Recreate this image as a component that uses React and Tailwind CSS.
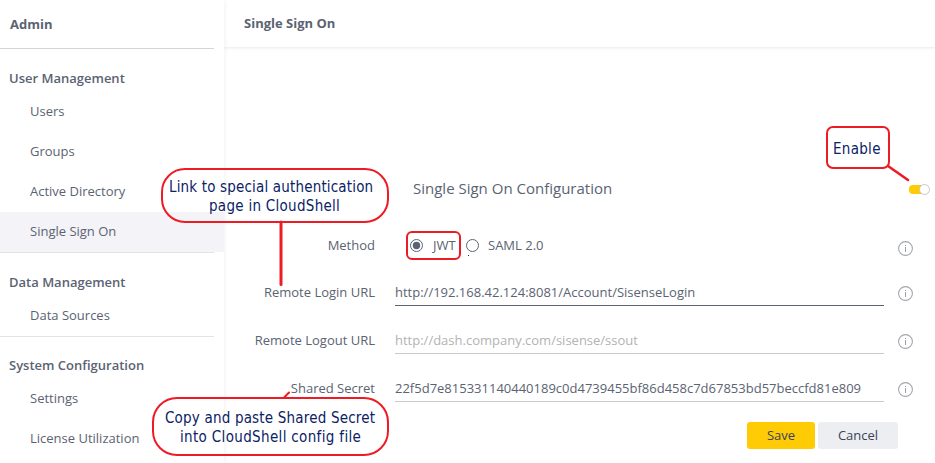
import React from "react";

const sections = [
  { title: "User Management", items: ["Users", "Groups", "Active Directory", "Single Sign On"] },
  { title: "Data Management", items: ["Data Sources"] },
  { title: "System Configuration", items: ["Settings", "License Utilization"] },
];

function Info() {
  return (
    <svg className="block h-[15px] w-[15px] shrink-0" viewBox="0 0 15 15" fill="none">
      <circle cx="7.5" cy="7.5" r="6.900" stroke="#a3a6b0" strokeWidth="1.1" />
      <path d="M7.500 4v1M7.500 6v5" stroke="#9b9ea9" />
    </svg>
  );
}

function Sidebar() {
  return (
    <aside className="z-10 flex w-[224px] shrink-0 flex-col bg-white shadow-[0_0_5px_rgba(0,0,0,0.08)]">
      <div className="mr-[10px] flex h-[49px] shrink-0 items-center border-b border-[#d5d5d5] pl-[10px] pt-px font-bold">Admin</div>
      {sections.map((s, i) => (
        <section key={s.title} className={i === 2 ? "pt-[18px]" : "pt-[19px]"}>
          <h2 className="h-6 pl-[9px] font-semibold leading-[20px]">{s.title}</h2>
          <ul>
            {s.items.map((item) => (
              <li key={item} className={`flex h-10 items-center pl-[30px] ${item === "Single Sign On" ? "bg-[#f3f3f8]" : ""}`}>
                {item}
              </li>
            ))}
          </ul>
          {i < 2 && <div className="mr-[10px] h-px bg-[#e2e3e6]" />}
        </section>
      ))}
    </aside>
  );
}

function Field({ label, value, line, tone }) {
  return (
    <div className="flex h-12 items-start">
      <label className="w-[151px] pt-[4px] text-right leading-[20px]">{label}</label>
      <div className={`ml-[20px] h-[28px] w-[489px] whitespace-nowrap border-b pt-[4px] leading-[20px] ${line} ${tone}`}>{value}</div>
      <div className="ml-[14px] mt-[8px]"><Info /></div>
    </div>
  );
}

export default function App() {
  return (
    <div className="relative flex h-[463px] w-[935px] overflow-hidden bg-white font-['Open_Sans',sans-serif] text-[13px] text-[#5b6372]">
      <Sidebar />
      <main className="flex flex-1 flex-col">
        <header className="flex h-[47px] shrink-0 items-center pl-[20px] font-bold shadow-[0_1px_3px_rgba(0,0,0,0.09)]">Single Sign On</header>
        <div className="mt-[129px] flex h-6 items-center justify-between pl-[189px] pr-[5px]">
          <h1 className="text-[15px]">Single Sign On Configuration</h1>
          <div className="mt-[2px] flex h-[9px] w-[21px] items-center justify-end rounded-[4px] bg-gradient-to-r from-[#ffcb05] from-70% to-transparent to-70%">
            <span className="h-[11px] w-[11px] shrink-0 rounded-full border border-[#c8c8c8] bg-white" />
          </div>
        </div>
        <div className="mt-[35px] flex h-[48px] items-start">
          <span className="w-[151px] text-right leading-[20px]">Method</span>
          <svg className="ml-[35px] mt-[4px] h-[13px] w-[13px]" viewBox="0 0 13 13" fill="none">
            <circle cx="6.5" cy="6.5" r="6" stroke="#5b6372" />
            <circle cx="6.5" cy="6.5" r="3.7" fill="#5b6372" />
          </svg>
          <span className="ml-[10px] w-[24px] leading-[20px]">JWT</span>
          <svg className="ml-[9px] mt-[4px] h-[13px] w-[13px]" viewBox="0 0 13 13" fill="none">
            <circle cx="6.5" cy="6.5" r="6" stroke="#5b6372" />
          </svg>
          <span className="ml-[9px] leading-[20px]">SAML 2.0</span>
          <div className="ml-auto mr-[22px] mt-[6px]"><Info /></div>
        </div>
        <div className="-mt-[5px]">
          <Field label="Remote Login URL" value="http://192.168.42.124:8081/Account/SisenseLogin" line="border-[#5b6372]" tone="" />
          <Field label="Remote Logout URL" value="http://dash.company.com/sisense/ssout" line="border-[#c9cad0]" tone="text-[#b3b3b3]" />
          <Field label="Shared Secret" value="22f5d7e815331140440189c0d4739455bf86d458c7d67853bd57beccfd81e809" line="border-[#c9cad0]" tone="" />
        </div>
        <div className="flex gap-[3px] pl-[523px]">
          <button className="h-[27px] w-[68px] rounded-[3px] bg-[#ffcb05] text-[#3a4356]">Save</button>
          <button className="h-[27px] w-[80px] rounded-[3px] bg-[#edeef2] text-[#3a4356]">Cancel</button>
        </div>
      </main>

      <svg className="absolute inset-0 z-20" width="935" height="463" fill="none" stroke="#ed1c24" strokeWidth="2" strokeLinecap="round">
        <rect x="162" y="169" width="226" height="53" rx="23" />
        <path d="M281 222V284.5" strokeWidth="3" />
        <rect x="153" y="398" width="235" height="57" rx="24" />
        <path d="M284.5 397L289 392.500" />
        <rect x="827" y="127" width="62" height="41" rx="6" />
        <path d="M888 166L908 180" strokeWidth="2.600" />
        <rect x="407" y="232" width="53" height="27" rx="5" />
        <rect x="468" y="255" width="1" height="1" fill="#1b2a5c" stroke="none" />
      </svg>
      <div className="absolute left-[169px] top-[178px] z-20 whitespace-nowrap font-['DejaVu_Sans_Condensed','DejaVu_Sans',sans-serif] text-[15px] leading-[19px] text-[#0b2265] [font-stretch:condensed]">
        <div className="tracking-[0.17px]">Link to special authentication</div>
        <div className="pl-[40px] tracking-[0.28px]">page in CloudShell</div>
      </div>
      <div className="absolute left-[165px] top-[409px] z-20 whitespace-nowrap font-['DejaVu_Sans_Condensed','DejaVu_Sans',sans-serif] text-[15px] leading-[19px] text-[#0b2265] [font-stretch:condensed]">
        <div className="tracking-[0.19px]">Copy and paste Shared Secret</div>
        <div className="pl-[15px] tracking-[0.34px]">into CloudShell config file</div>
      </div>
      <div className="absolute left-[833px] top-[139px] z-20 font-['DejaVu_Sans_Condensed','DejaVu_Sans',sans-serif] text-[15px] leading-[20px] tracking-[0.3px] text-[#0b2265] [font-stretch:condensed]">Enable</div>
    </div>
  );
}
